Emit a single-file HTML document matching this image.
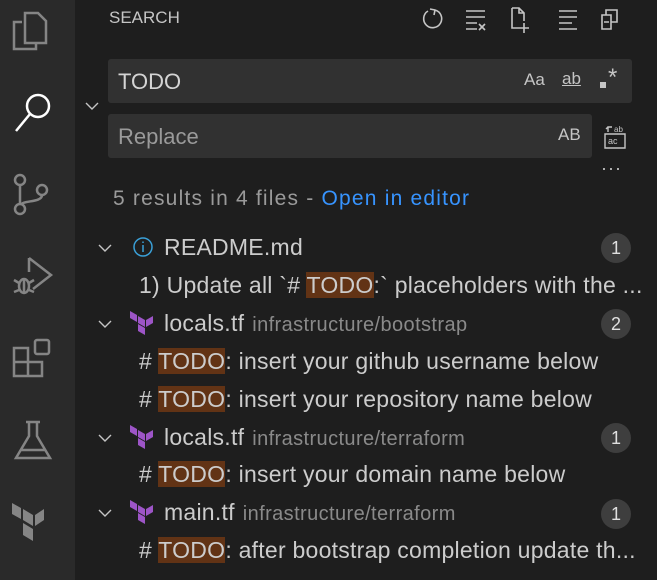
<!DOCTYPE html>
<html><head><meta charset="utf-8"><style>
*{margin:0;padding:0;box-sizing:border-box}
body{width:657px;height:580px;overflow:hidden;background:#1e1e1e;font-family:"Liberation Sans",sans-serif;position:relative;color:#ccc}
.act{position:absolute;left:0;top:0;width:75px;height:580px;background:#2a2a2a}
.act svg{position:absolute;left:12px}
.abs{position:absolute}
.inp{position:absolute;background:#313131;border-radius:3px}
.row{position:absolute;left:0;height:38px;font-size:23px;line-height:38px;white-space:nowrap;color:#cccccc;letter-spacing:0.25px}
.hl{background:#623315}
.dim{color:#8a8a8a;font-size:20px;letter-spacing:0.4px;margin-left:8px}
.badge{position:absolute;left:601px;width:30px;height:30px;border-radius:15px;background:#3e3e3e;color:#e0e0e0;font-size:18px;line-height:30px;text-align:center}
.chev{position:absolute;left:97px}
</style></head><body>
<div class="act">
<svg style="top:8px" width="44" height="46" viewBox="0 0 44 46" fill="none" stroke="#858585" stroke-width="2.5"><path d="M13 5h13l8 8v22H13z M10 14H2v27h22v-6"/></svg>
<svg style="top:90px" width="44" height="44" viewBox="0 0 44 44" fill="none" stroke="#ffffff" stroke-width="2.5"><circle cx="26" cy="16" r="11"/><path d="M18 24L4 41"/></svg>
<svg style="top:172px" width="44" height="44" viewBox="0 0 44 44" fill="none" stroke="#858585" stroke-width="2.5"><circle cx="8" cy="8" r="5"/><circle cx="8" cy="37" r="5"/><circle cx="30" cy="18" r="5"/><path d="M8 13v19M30 23c0 8-20 5-21 10"/></svg>
<svg style="top:255px" width="44" height="44" viewBox="0 0 44 44" fill="none" stroke="#858585" stroke-width="2.5"><path d="M17 3l22 17-18 14M17 3v14"/><ellipse cx="12" cy="31" rx="5" ry="7"/><path d="M2 25l5 3M2 37l5-2M22 25l-5 3M22 37l-5-2M12 24v14"/></svg>
<svg style="top:338px" width="44" height="44" viewBox="0 0 44 44" fill="none" stroke="#858585" stroke-width="2.5"><path d="M2 10h14v28H2z M2 24h28v14H16"/><rect x="23" y="2" width="14" height="14" rx="2"/></svg>
<svg style="top:420px" width="44" height="44" viewBox="0 0 44 44" fill="none" stroke="#858585" stroke-width="2.5"><path d="M14 2h14M17 2v14L4 38h34L25 16V2M9 30h24"/></svg>
<svg style="top:503px;left:12px" width="32" height="46" viewBox="0 0 32 46" fill="#858585"><path d="M0 0l9 5v11L0 11z M11 6l10 6v11l-10-6z M23 12l9-6v11l-9 6z M11 20l10 6v12l-10-6z"/></svg>
</div>
<div class="abs" style="left:109px;top:8px;font-size:17px;color:#c5c5c5;line-height:20px">SEARCH</div>
<svg class="abs" style="left:420px;top:4px" width="220" height="30" viewBox="0 0 220 30" fill="none" stroke="#c5c5c5" stroke-width="1.6">
<path d="M8 7a9 9 0 1 0 7-1M15 6l-1 5M15 6l-5-1"/>
<path d="M46 7h19M46 13h19M46 19h11M46 25h11M59 20l6 6M65 20l-6 6"/>
<path d="M92 4h7l5 5v8M99 4v5h5M92 4v20h8M104 19v10M99 24h10"/>
<path d="M139 7h18M139 13h18M139 19h13M139 25h18"/>
<path d="M182 11h9v14h-9z M186 11V6h11v12h-6M184 18h5"/>
</svg>
<div class="inp" style="left:108px;top:59px;width:524px;height:44px"></div>
<div class="abs" style="left:118px;top:68px;font-size:22px;color:#d4d4d4;line-height:28px">TODO</div>
<div class="abs" style="left:524px;top:70px;font-size:17px;color:#c5c5c5">Aa</div>
<div class="abs" style="left:562px;top:69px;font-size:17px;color:#c5c5c5;text-decoration:underline">ab</div>
<div class="abs" style="left:600px;top:82px;width:6px;height:6px;background:#c5c5c5"></div>
<div class="abs" style="left:608px;top:64px;font-size:24px;color:#c5c5c5">*</div>
<svg class="abs" style="left:84px;top:100px" width="16" height="12" viewBox="0 0 16 12" fill="none" stroke="#c5c5c5" stroke-width="1.4"><path d="M2 3l6 6 6-6"/></svg>
<div class="inp" style="left:108px;top:114px;width:484px;height:44px"></div>
<div class="abs" style="left:118px;top:123px;font-size:22px;color:#9a9a9a;line-height:28px">Replace</div>
<div class="abs" style="left:558px;top:125px;font-size:17px;color:#c5c5c5">AB</div>
<svg class="abs" style="left:600px;top:122px" width="30" height="28" viewBox="0 0 30 28" fill="none" stroke="#c5c5c5" stroke-width="1.4"><path d="M5 12h20v14H5z M8 10V5h4M6 7l2-2"/><text x="14" y="10" font-size="8" fill="#c5c5c5" stroke="none" font-family="Liberation Sans">ab</text><text x="8" y="22" font-size="9" fill="#c5c5c5" stroke="none" font-family="Liberation Sans">ac</text></svg>
<div class="abs" style="left:601px;top:158px;font-size:18px;color:#c5c5c5;letter-spacing:1px">···</div>
<div class="abs" style="left:113px;top:186px;font-size:21px;letter-spacing:1.2px;color:#9a9a9a;line-height:26px">5 results in 4 files - <span style="color:#3794ff">Open in editor</span></div>

<svg width="0" height="0" style="position:absolute"><defs>
<g id="ch"><path d="M2 4l6 6 6-6" fill="none" stroke="#c5c5c5" stroke-width="1.4"/></g>
<g id="tf" fill="#9d55c7"><path d="M0 0l7 4v7L0 7z M8 5l7 4v7L8 12z M16 9l7-4v7l-7 4z M8 13l7 4v7l-7-4z"/></g>
</defs></svg>

<div class="row" style="top:228px;left:0;width:657px">
<svg class="chev" style="top:13px" width="16" height="14"><use href="#ch"/></svg>
<svg class="abs" style="left:132px;top:8px" width="22" height="22" viewBox="0 0 22 22" fill="none" stroke="#3aa0d8" stroke-width="1.5"><circle cx="11" cy="11" r="9"/><path d="M11 9v7M11 5.5v1.5"/></svg>
<span class="abs" style="left:164px">README.md</span></div>
<div class="badge" style="top:233px">1</div>
<div class="row" style="top:266px;left:139px">1) Update all `# <span class="hl">TODO</span>:` placeholders with the ...</div>

<div class="row" style="top:304px;width:657px">
<svg class="chev" style="top:13px" width="16" height="14"><use href="#ch"/></svg>
<svg class="abs" style="left:130px;top:7px" width="24" height="26"><use href="#tf"/></svg>
<span class="abs" style="left:164px">locals.tf<span class="dim">infrastructure/bootstrap</span></span></div>
<div class="badge" style="top:309px">2</div>
<div class="row" style="top:342px;left:139px"># <span class="hl">TODO</span>: insert your github username below</div>
<div class="row" style="top:380px;left:139px"># <span class="hl">TODO</span>: insert your repository name below</div>

<div class="row" style="top:418px;width:657px">
<svg class="chev" style="top:13px" width="16" height="14"><use href="#ch"/></svg>
<svg class="abs" style="left:130px;top:7px" width="24" height="26"><use href="#tf"/></svg>
<span class="abs" style="left:164px">locals.tf<span class="dim">infrastructure/terraform</span></span></div>
<div class="badge" style="top:423px">1</div>
<div class="row" style="top:455px;left:139px"># <span class="hl">TODO</span>: insert your domain name below</div>

<div class="row" style="top:493px;width:657px">
<svg class="chev" style="top:13px" width="16" height="14"><use href="#ch"/></svg>
<svg class="abs" style="left:130px;top:7px" width="24" height="26"><use href="#tf"/></svg>
<span class="abs" style="left:164px">main.tf<span class="dim">infrastructure/terraform</span></span></div>
<div class="badge" style="top:499px">1</div>
<div class="row" style="top:531px;left:139px"># <span class="hl">TODO</span>: after bootstrap completion update th...</div>
</body></html>
